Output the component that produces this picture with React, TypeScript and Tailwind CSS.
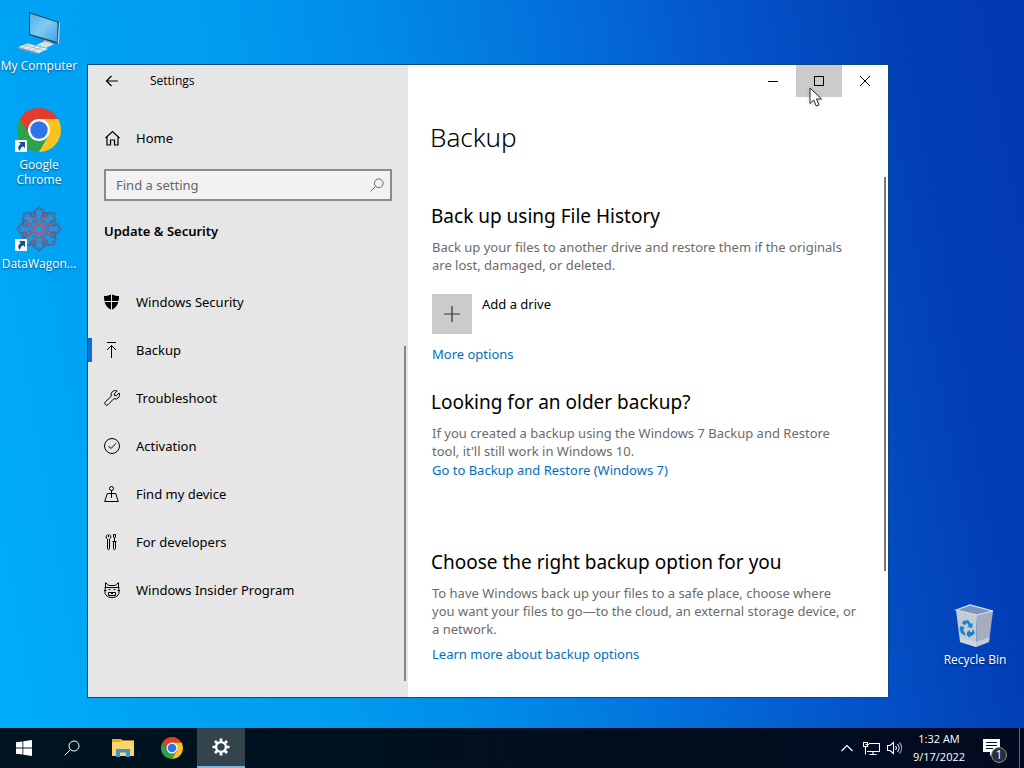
import type { ReactNode } from 'react';

function ChromeLogo({ className }: { className: string }) {
  return (
    <svg viewBox="0 0 48 48" className={className} aria-hidden="true">
      <path d="M4.950 13 A22 22 0 0 1 43.050 13 L24 13 L24 24 L14.500 29.500 Z" fill="#e33b2e" />
      <path d="M4.950 13 L14.500 29.500 L24 35 L33.500 29.500 L24 46 A22 22 0 0 1 4.950 13 Z" fill="#2ba24c" />
      <path d="M24 13 L43.050 13 A22 22 0 0 1 24 46 L33.500 29.500 Z" fill="#fcc31e" />
      <circle cx="24" cy="24" r="11" fill="#fff" />
      <circle cx="24" cy="24" r="8.700" fill="#2f74e8" />
    </svg>
  );
}

function ComputerIcon() {
  return (
    <svg viewBox="0 0 48 48" className="size-12" aria-hidden="true">
      <defs>
        <linearGradient id="screen" x1="0" y1="0" x2="1" y2="1">
          <stop offset="0" stopColor="#4fb0ea" />
          <stop offset="0.5" stopColor="#80cbf4" />
          <stop offset="1" stopColor="#3aa0e4" />
        </linearGradient>
      </defs>
      <path d="M29 32 L36 34 L36 37 L29 36 Z" fill="#9fb0bd" />
      <path d="M21 38 L29 34.500 L39 37 L31 41 Z" fill="#d7e1e8" />
      <path d="M14 5 L44 15 L43 37 L14 28 Z" fill="#23465c" />
      <path d="M15 6.500 L42.500 15.500 L42 35 L15 27 Z" fill="url(#screen)" />
      <path d="M44 15 L45 16 L44 37 L42.500 36.500 Z" fill="#b9cad6" />
      <path d="M3 40 L13 36.500 L33 42 L24 46 Z" fill="#e6edf1" />
      <path d="M3 40 L24 46 L24 47.500 L3 41.500 Z" fill="#8ea2b0" />
      <path d="M7 41 L16 37.500 M12 42.500 L21 39 M17 44 L26 40.500 M9 38 L29 43.500" stroke="#a8b7c2" strokeWidth="0.8" />
    </svg>
  );
}

const petalAngles = [0, 45, 90, 135, 180, 225, 270, 315];

function RosetteIcon() {
  return (
    <svg viewBox="0 0 48 48" className="size-12" fill="none" aria-hidden="true">
      {petalAngles.map((angle) => (
        <g key={angle} transform={`rotate(${angle} 24 24)`}>
          <path d="M24 2 L33 10 L24 20 L15 10 Z" stroke="#4d6596" strokeWidth="1.4" />
          <path d="M19 5 H29 V15 H19 Z" stroke="#5c6894" strokeWidth="1.2" />
          <path d="M24 9 L29 14 L24 21 L19 14 Z" stroke="#a9607f" strokeWidth="1.2" />
        </g>
      ))}
      <circle cx="24" cy="24" r="5.500" stroke="#a9607f" strokeWidth="1.3" />
    </svg>
  );
}

function ShortcutArrow() {
  return (
    <svg viewBox="0 0 12 12" className="absolute bottom-0.5 left-0 size-3" aria-hidden="true">
      <rect x="0" y="0" width="12" height="12" fill="#f4f8fb" />
      <path d="M4 2 H10 V8 L8 6.200 C6 7.500 5.200 8.800 5 11 C2.200 8.500 3 5.500 5.800 4 Z" fill="#1b4e8f" />
    </svg>
  );
}

function RecycleBinIcon() {
  return (
    <svg viewBox="0 0 48 48" className="size-12" aria-hidden="true">
      <path d="M5 9 L26 14 L25 46 L9 41 Z" fill="#c3cbd6" />
      <path d="M26 14 L42 10 L38 41 L25 46 Z" fill="#a3adbe" />
      <path d="M5 9 L19 4 L42 10 L26 14 Z" fill="#7c94bc" stroke="#dbe6f0" strokeWidth="1.2" />
      <path d="M9 36 L25 41 L38.500 36 L38 41 L25 46 L9 41 Z" fill="#d7d7dc" opacity="0.7" />
      <path d="M12 20 L17 19 L20 23 L22 22 L21 27 L16 26 L18 25 L16 22 L14 24 L11 23 Z" fill="#1785d2" />
      <path d="M9.500 25 L13 26 L13 28 L12 29 L14 32 L14 35 L10 32 L8.500 28 Z" fill="#1785d2" />
      <path d="M16 31 L19 29 L19 31 L21 31 L22 28 L24 32 L21 35 L19 35 L19 37 L15.500 34 Z" fill="#1785d2" />
    </svg>
  );
}

function LineIcon({ children }: { children: ReactNode }) {
  return (
    <svg viewBox="0 0 16 16" className="size-4 shrink-0" fill="none" stroke="currentColor" strokeWidth="1" aria-hidden="true">
      {children}
    </svg>
  );
}

const navItems: { label: string; icon: ReactNode; current?: boolean }[] = [
  {
    label: 'Windows Security',
    icon: (
      <>
        <path d="M7.500 0 C9.500 1.500 12 2 15 2 C15 8.500 13.500 13 7.500 16 C1.500 13 0 8.500 0 2 C3 2 5.500 1.500 7.500 0 Z" fill="currentColor" stroke="none" />
        <path d="M7.500 0 V16 M0 7.500 H15" stroke="#e6e6e6" />
      </>
    ),
  },
  {
    label: 'Backup',
    current: true,
    icon: <path d="M3 .500 H12 M7.500 16 V3.500 M3 8 L7.500 3.500 L12 8" />,
  },
  {
    label: 'Troubleshoot',
    icon: (
      <path d="M13.200 1 A4.200 4.200 0 0 0 7.300 6.200 L1.200 12 A2 2 0 0 0 4 14.800 L9.800 8.700 A4.200 4.200 0 0 0 15.200 3 L12.300 5.600 L10.400 5.600 L10.400 3.700 Z" />
    ),
  },
  {
    label: 'Activation',
    icon: (
      <>
        <circle cx="8" cy="8" r="7.500" />
        <path d="M4.500 8 L7 10.500 L12 5.300" />
      </>
    ),
  },
  {
    label: 'Find my device',
    icon: (
      <>
        <circle cx="7.500" cy="2.500" r="2" />
        <path d="M7.500 4.500 V12 M5 7.500 H3.300 L.700 15.500 H14.300 L11.700 7.500 H10 M5 7.500 H10" />
      </>
    ),
  },
  {
    label: 'For developers',
    icon: (
      <>
        <path d="M4.500 .500 V3 M3.500 .700 A2.400 2.400 0 0 0 3.500 5 V14.500 A1 1 0 0 0 5.500 14.500 V5 A2.400 2.400 0 0 0 5.500 .700" />
        <path d="M9.500 .500 H11.500 V3 L10.500 4 V7.500 M9.500 .500 V3 L10.500 4 M8.500 7.500 H12.500 M9.500 7.500 V14.500 A1 1 0 0 0 11.500 14.500 V7.500" />
      </>
    ),
  },
  {
    label: 'Windows Insider Program',
    icon: (
      <>
        <path d="M1.500 5 L1.500 .700 L5 3.500 H11 L14.500 .700 L14.500 5 M.500 5.500 H15.500 M1.500 5.500 C.800 9 .500 11 2 13 C3.500 15 5.500 15.500 8 15.500 C10.500 15.500 12.500 15 14 13 C15.500 11 15.200 9 14.500 5.500" />
        <path d="M0 8.500 H2.500 M13.500 8.500 H16 M4.500 7.500 H6.500 M9.500 7.500 H11.500 M4.500 10.500 H11.500 V13.500 H4.500 Z M7 11.500 H9" />
      </>
    ),
  },
];

function SearchGlyph({ className }: { className: string }) {
  return (
    <svg viewBox="0 0 16 16" className={className} fill="none" stroke="currentColor" aria-hidden="true">
      <circle cx="10" cy="6" r="5" />
      <path d="M6.300 9.700 L.700 15.300" />
    </svg>
  );
}

function DesktopIcon({ label, shortcut, children }: { label: string; shortcut?: boolean; children: ReactNode }) {
  return (
    <button className="flex w-20 flex-col items-center gap-[3px] text-center text-xs leading-[15px] text-white [text-shadow:0_1px_2px_rgba(0,0,0,0.5)]">
      <span className="relative">
        {children}
        {shortcut && <ShortcutArrow />}
      </span>
      <span>{label}</span>
    </button>
  );
}

function SettingsWindow() {
  return (
    <section
      aria-label="Settings"
      className="absolute top-16 right-[135px] bottom-[30px] left-[87px] flex border border-[#0a4a80] bg-white font-['Noto_Sans',sans-serif] text-[13px] text-black"
    >
      <aside className="relative flex w-2/5 flex-col bg-[#e6e6e6]">
        <div className="flex h-8 items-center">
          <button aria-label="Back" className="flex h-8 w-12 items-center justify-center">
            <svg viewBox="0 0 14 12" className="h-3 w-3.5" fill="none" stroke="currentColor" strokeWidth="1.200" aria-hidden="true">
              <path d="M13 6 H1.500 M6.500 1 L1.500 6 L6.500 11" />
            </svg>
          </button>
          <span className="ml-3.5 font-['Open_Sans',sans-serif] text-xs">Settings</span>
        </div>
        <a href="#home" className="mt-[17px] flex h-12 items-center gap-4 px-4 leading-5">
          <LineIcon>
            <path d="M1.500 8 L8.500 1.500 L15.500 8 M3 7 V15 H6.500 V10 H10.500 V15 H14 V7" strokeWidth="1.200" />
          </LineIcon>
          Home
        </a>
        <div className="mx-4 mt-[7px] flex h-8 items-center border-2 border-[#8c8c8c] bg-[#f2f2f2] pr-1.5 pl-2.5">
          <input
            type="text"
            aria-label="Find a setting"
            placeholder="Find a setting"
            className="h-6 min-w-0 flex-1 bg-transparent leading-6 outline-none placeholder:text-[#666]"
          />
          <SearchGlyph className="size-3.5 text-[#555]" />
        </div>
        <h2 className="mx-4 mt-5 leading-5 font-semibold">Update &amp; Security</h2>
        <nav aria-label="Update & Security" className="mt-[37px] flex flex-col">
          {navItems.map((item) => (
            <a
              key={item.label}
              href="#"
              aria-current={item.current ? 'page' : undefined}
              className="relative flex h-12 items-center gap-4 px-4 leading-5"
            >
              {item.current && <span className="absolute left-0 h-6 w-1 bg-[#0a6fd0]" />}
              <LineIcon>{item.icon}</LineIcon>
              {item.label}
            </a>
          ))}
        </nav>
        <span className="absolute right-0.5 bottom-4 h-[335px] w-0.5 bg-[#858585]" />
      </aside>

      <main className="relative flex-1">
        <div className="flex h-8 justify-end">
          <button aria-label="Minimize" className="flex w-[46px] items-center justify-center">
            <svg viewBox="0 0 10 10" className="size-2.5" aria-hidden="true">
              <path d="M0 5.500 H10" stroke="#000" />
            </svg>
          </button>
          <button aria-label="Maximize" className="flex w-[46px] items-center justify-center bg-[#cbcbcb]">
            <svg viewBox="0 0 10 10" className="size-2.5" aria-hidden="true">
              <rect x=".5" y=".5" width="9" height="9" fill="none" stroke="#000" />
            </svg>
          </button>
          <button aria-label="Close" className="flex w-[46px] items-center justify-center">
            <svg viewBox="0 0 10 10" className="size-2.5" aria-hidden="true">
              <path d="M0 0 L10 10 M10 0 L0 10" stroke="#000" />
            </svg>
          </button>
        </div>
        <svg viewBox="0 0 14 21" className="absolute top-[22px] right-[65px] h-[21px] w-3.5 drop-shadow-sm" aria-hidden="true">
          <path d="M1 1 V16.500 L4.700 13 L7.300 19 L10 17.800 L7.500 12 H12.500 Z" fill="#fff" stroke="#222" />
        </svg>

        <div className="px-6">
          <h1 className="-ml-0.5 mt-5 text-[26px] leading-10 font-light">Backup</h1>

          <h2 className="-ml-px mt-[45px] text-[19px] leading-7">Back up using File History</h2>
          <p className="mt-2 leading-[18px] text-[#6b6b6b]">
            Back up your files to another drive and restore them if the originals
            <br />
            are lost, damaged, or deleted.
          </p>
          <button className="mt-5 flex items-start gap-2.5 leading-5">
            <span className="flex size-10 items-center justify-center bg-[#cbcbcb]">
              <svg viewBox="0 0 16 16" className="size-4" aria-hidden="true">
                <path d="M8 0 V16 M0 8 H16" stroke="#333" strokeWidth="1.200" />
              </svg>
            </span>
            Add a drive
          </button>
          <a href="#more" className="mt-2.5 block leading-5 text-[#0070bc]">More options</a>

          <h2 className="-ml-px mt-6 text-[19px] leading-7">Looking for an older backup?</h2>
          <p className="mt-2 leading-[18px] text-[#6b6b6b]">
            If you created a backup using the Windows 7 Backup and Restore
            <br />
            tool, it'll still work in Windows 10.
          </p>
          <a href="#restore" className="block leading-5 text-[#0070bc]">Go to Backup and Restore (Windows 7)</a>

          <h2 className="-ml-px mt-[68px] text-[19px] leading-7">Choose the right backup option for you</h2>
          <p className="mt-2 leading-[18px] text-[#6b6b6b]">
            To have Windows back up your files to a safe place, choose where
            <br />
            you want your files to go—to the cloud, an external storage device, or
            <br />a network.
          </p>
          <a href="#learn" className="mt-1.5 block leading-5 text-[#0070bc]">Learn more about backup options</a>
        </div>
        <span className="absolute top-28 right-0.5 h-[394px] w-0.5 bg-[#777]" />
      </main>
    </section>
  );
}

function Taskbar() {
  return (
    <footer className="flex h-10 items-stretch bg-linear-to-r from-[#01141f] to-[#020a20] text-white">
      <button aria-label="Start" className="flex w-12 items-center justify-center">
        <svg viewBox="0 0 16 16" className="size-4" fill="currentColor" aria-hidden="true">
          <path d="M0 2.300 L6.500 1.400 V7.600 H0 Z M7.300 1.300 L16 0 V7.600 H7.300 Z M0 8.400 H6.500 V14.600 L0 13.700 Z M7.300 8.400 H16 V16 L7.300 14.700 Z" />
        </svg>
      </button>
      <button aria-label="Search" className="flex w-12 items-center justify-center">
        <SearchGlyph className="size-4" />
      </button>
      <button aria-label="File Explorer" className="ml-[3px] flex w-12 items-center justify-center">
        <svg viewBox="0 0 22 18" className="h-[18px] w-[22px]" aria-hidden="true">
          <path d="M0 0 H9 L11 1.500 H22 V17 H0 Z" fill="#e9a91f" />
          <path d="M0 3 H8 L10 1.800 H22 V17 H0 Z" fill="#fbd66b" />
          <path d="M4 10 H18 V18 H14 V13.500 H8 V18 H4 Z" fill="#3e93cc" />
        </svg>
      </button>
      <button aria-label="Google Chrome" className="ml-px flex w-12 items-center justify-center">
        <ChromeLogo className="size-6" />
      </button>
      <button aria-label="Settings" className="ml-px flex w-12 items-center justify-center border-b-2 border-[#7ab8e8] bg-[#34444d]">
        <svg viewBox="0 0 20 20" className="size-[18px]" fill="none" stroke="currentColor" aria-hidden="true">
          <circle cx="10" cy="10" r="5.500" strokeWidth="2.600" />
          <path d="M10 .500 V4 M10 16 V19.500 M.500 10 H4 M16 10 H19.500 M3.300 3.300 L5.800 5.800 M14.200 14.200 L16.700 16.700 M16.700 3.300 L14.200 5.800 M5.800 14.200 L3.300 16.700" strokeWidth="3" />
        </svg>
      </button>

      <div className="ml-auto flex items-center">
        <button aria-label="Show hidden icons" className="flex h-10 w-6 items-center justify-center">
          <svg viewBox="0 0 12 8" className="h-2 w-3" fill="none" stroke="currentColor" strokeWidth="1.200" aria-hidden="true">
            <path d="M.500 7 L6 1.500 L11.500 7" />
          </svg>
        </button>
        <button aria-label="Network" className="flex h-10 w-6 items-center justify-center">
          <svg viewBox="0 0 17 15" className="h-[15px] w-[17px]" fill="none" stroke="currentColor" strokeWidth="1.100" aria-hidden="true">
            <path d="M6 2.500 H16.500 V10.500 H4 M10 10.500 V13.500 M6.500 13.500 H13.500 M.500 1.500 H4.500 V5.500 H.500 Z M2.500 5.500 V13.500 M2.500 3.500 H6" />
          </svg>
        </button>
        <button aria-label="Volume" className="flex h-10 w-6 items-center justify-center">
          <svg viewBox="0 0 16 14" className="h-3.5 w-4" fill="none" stroke="currentColor" strokeWidth="1.100" aria-hidden="true">
            <path d="M.500 4.500 H3 L6.500 1.500 V12.500 L3 9.500 H.500 Z M8.500 5 A3 3 0 0 1 8.500 9 M10.500 3 A6 6 0 0 1 10.500 11" />
            <path d="M12.500 1.500 A8 8 0 0 1 12.500 12.500" opacity="0.600" />
          </svg>
        </button>
        <button className="w-16 text-center text-[11px] leading-[18px]">
          <span className="block">1:32 AM</span>
          <span className="block">9/17/2022</span>
        </button>
        <button aria-label="1 new notification" className="flex h-10 w-12 items-center justify-center pt-1">
          <span className="relative">
            <svg viewBox="0 0 24 24" className="size-6" aria-hidden="true">
              <path d="M0 1 H17 V14 H11 L7 18 V14 H0 Z" fill="#fff" />
              <path d="M3 4.500 H14 M3 7.500 H14 M3 10.500 H10" stroke="#061022" />
            </svg>
            <span className="absolute right-0 -bottom-px flex size-4 items-center justify-center rounded-full border border-[#8a8f94] bg-[#2b3036] text-xs leading-4">
              1
            </span>
          </span>
        </button>
        <button aria-label="Show desktop" className="h-10 w-[5px] border-l border-[#5b6270]" />
      </div>
    </footer>
  );
}

export default function App() {
  return (
    <div className="flex min-h-screen flex-col bg-[linear-gradient(80deg,#00b0fa_0%,#00a4f4_12%,#009cf0_30%,#008ce8_43%,#0376de_56%,#0456cb_73%,#0240b8_88%,#0238b0_100%)] font-['Open_Sans','Noto_Sans',sans-serif]">
      <div className="relative min-h-[728px] flex-1">
        <div className="absolute top-[7px] left-[-1px]">
          <DesktopIcon label="My Computer">
            <ComputerIcon />
          </DesktopIcon>
        </div>
        <div className="absolute top-[106px] left-[-1px]">
          <DesktopIcon label="Google Chrome" shortcut>
            <ChromeLogo className="size-12" />
          </DesktopIcon>
        </div>
        <div className="absolute top-[205px] left-[-1px]">
          <DesktopIcon label="DataWagon..." shortcut>
            <RosetteIcon />
          </DesktopIcon>
        </div>
        <div className="absolute right-[9px] bottom-[61px]">
          <DesktopIcon label="Recycle Bin">
            <RecycleBinIcon />
          </DesktopIcon>
        </div>
        <SettingsWindow />
      </div>
      <Taskbar />
    </div>
  );
}
